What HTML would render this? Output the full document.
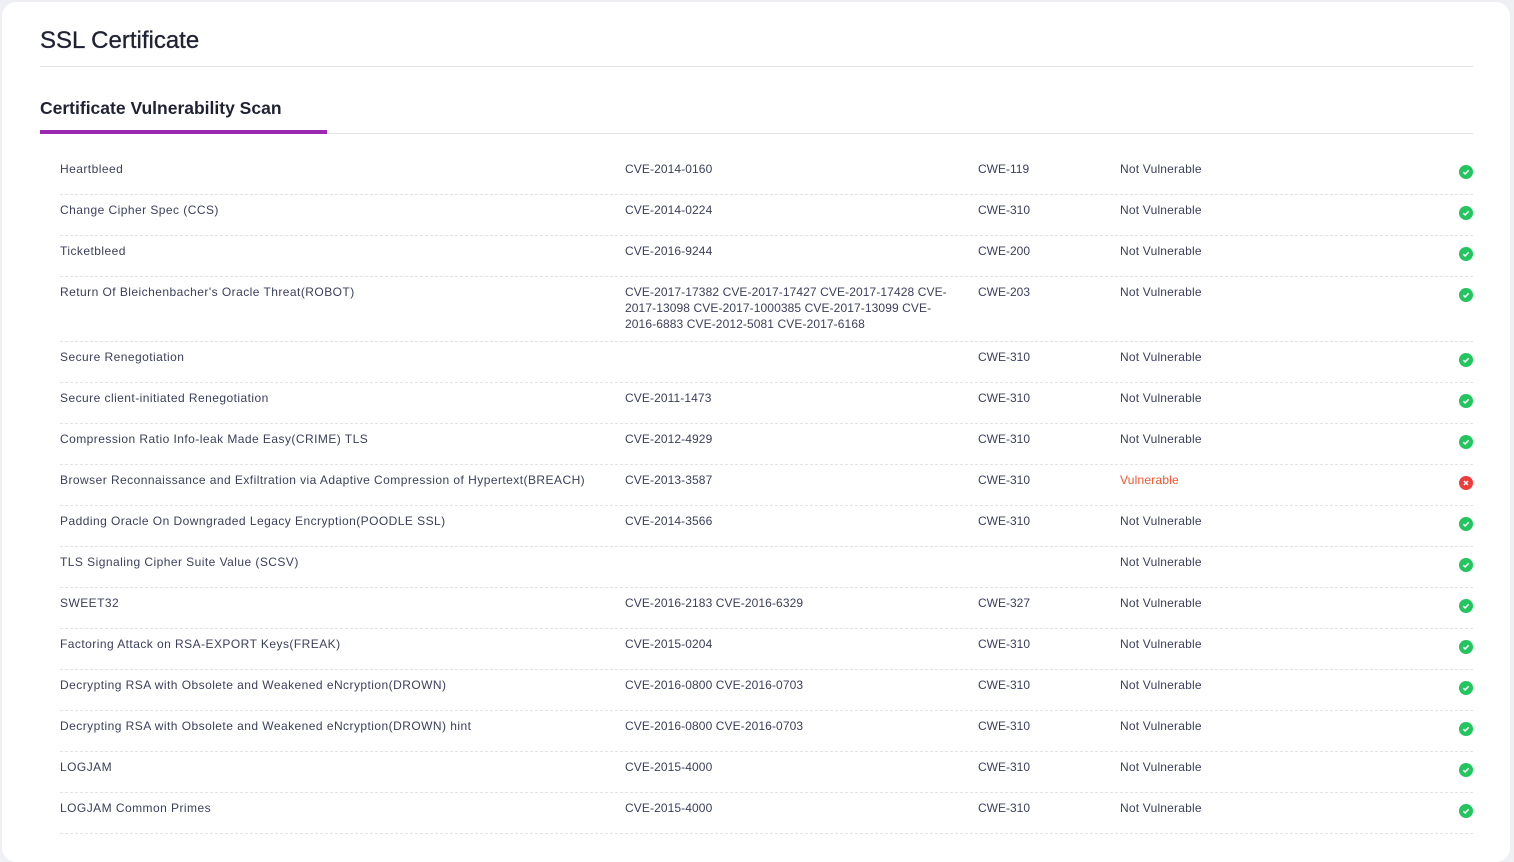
<!DOCTYPE html>
<html><head><style>
body{margin:0;background:#eef0f3;font-family:"Liberation Sans",sans-serif;width:1514px;height:844px;overflow:hidden;position:relative}
.card{position:absolute;left:2px;top:2px;width:1508px;height:860px;background:#fff;border-radius:14px}
h1{position:absolute;left:40px;top:27px;margin:0;font-size:24px;font-weight:normal;color:#1f2233;letter-spacing:0;-webkit-text-stroke:0.3px #1f2233}
.l1{position:absolute;left:40px;right:41px;top:66px;border-top:1px solid #e4e5ea}
h2{position:absolute;left:40px;top:98px;margin:0;font-size:17.5px;font-weight:bold;color:#1f2233}
.l2{position:absolute;left:40px;right:41px;top:133px;border-top:1px solid #e4e5ea}
.tab{position:absolute;left:40px;width:287px;top:130px;height:4px;background:#9c27b0}
.row{position:absolute;left:60px;width:1413px;border-bottom:1px dashed #e2e3e7;font-size:12px;color:#3a3f5c;line-height:16px}
.row div{position:absolute;top:8px}
.c1{left:0;letter-spacing:.45px}.c2{left:565px;width:340px;letter-spacing:.1px;white-space:nowrap}.c3{left:918px}.c4{left:1060px;letter-spacing:.2px}
.ic{position:absolute;left:1399px;top:12px!important;width:14px;height:14px;border-radius:50%;background:#22c55e}
.ic svg{position:absolute;left:0;top:0}
.bad{background:#ef3b3b}
.red{color:#f2542d}
</style></head><body>
<div class="card"></div>
<h1>SSL Certificate</h1>
<div class="l1"></div>
<h2>Certificate Vulnerability Scan</h2>
<div class="l2"></div>
<div class="tab"></div>

<div class="row" style="top:153px;height:41px"><div class="c1">Heartbleed</div><div class="c2">CVE-2014-0160</div><div class="c3">CWE-119</div><div class="c4">Not Vulnerable</div><div class="ic"><svg width="14" height="14"><path d="M4.3 7.2l1.8 1.7 3.6-3.6" stroke="#fff" stroke-width="1.5" fill="none"/></svg></div></div>
<div class="row" style="top:194px;height:41px"><div class="c1">Change Cipher Spec (CCS)</div><div class="c2">CVE-2014-0224</div><div class="c3">CWE-310</div><div class="c4">Not Vulnerable</div><div class="ic"><svg width="14" height="14"><path d="M4.3 7.2l1.8 1.7 3.6-3.6" stroke="#fff" stroke-width="1.5" fill="none"/></svg></div></div>
<div class="row" style="top:235px;height:41px"><div class="c1">Ticketbleed</div><div class="c2">CVE-2016-9244</div><div class="c3">CWE-200</div><div class="c4">Not Vulnerable</div><div class="ic"><svg width="14" height="14"><path d="M4.3 7.2l1.8 1.7 3.6-3.6" stroke="#fff" stroke-width="1.5" fill="none"/></svg></div></div>
<div class="row" style="top:276px;height:65px"><div class="c1">Return Of Bleichenbacher's Oracle Threat(ROBOT)</div><div class="c2">CVE-2017-17382 CVE-2017-17427 CVE-2017-17428 CVE-<br>2017-13098 CVE-2017-1000385 CVE-2017-13099 CVE-<br>2016-6883 CVE-2012-5081 CVE-2017-6168</div><div class="c3">CWE-203</div><div class="c4">Not Vulnerable</div><div class="ic"><svg width="14" height="14"><path d="M4.3 7.2l1.8 1.7 3.6-3.6" stroke="#fff" stroke-width="1.5" fill="none"/></svg></div></div>
<div class="row" style="top:341px;height:41px"><div class="c1">Secure Renegotiation</div><div class="c2"></div><div class="c3">CWE-310</div><div class="c4">Not Vulnerable</div><div class="ic"><svg width="14" height="14"><path d="M4.3 7.2l1.8 1.7 3.6-3.6" stroke="#fff" stroke-width="1.5" fill="none"/></svg></div></div>
<div class="row" style="top:382px;height:41px"><div class="c1">Secure client-initiated Renegotiation</div><div class="c2">CVE-2011-1473</div><div class="c3">CWE-310</div><div class="c4">Not Vulnerable</div><div class="ic"><svg width="14" height="14"><path d="M4.3 7.2l1.8 1.7 3.6-3.6" stroke="#fff" stroke-width="1.5" fill="none"/></svg></div></div>
<div class="row" style="top:423px;height:41px"><div class="c1">Compression Ratio Info-leak Made Easy(CRIME) TLS</div><div class="c2">CVE-2012-4929</div><div class="c3">CWE-310</div><div class="c4">Not Vulnerable</div><div class="ic"><svg width="14" height="14"><path d="M4.3 7.2l1.8 1.7 3.6-3.6" stroke="#fff" stroke-width="1.5" fill="none"/></svg></div></div>
<div class="row" style="top:464px;height:41px"><div class="c1">Browser Reconnaissance and Exfiltration via Adaptive Compression of Hypertext(BREACH)</div><div class="c2">CVE-2013-3587</div><div class="c3">CWE-310</div><div class="c4 red">Vulnerable</div><div class="ic bad"><svg width="14" height="14"><path d="M5 5l4 4M9 5l-4 4" stroke="#fff" stroke-width="1.5"/></svg></div></div>
<div class="row" style="top:505px;height:41px"><div class="c1">Padding Oracle On Downgraded Legacy Encryption(POODLE SSL)</div><div class="c2">CVE-2014-3566</div><div class="c3">CWE-310</div><div class="c4">Not Vulnerable</div><div class="ic"><svg width="14" height="14"><path d="M4.3 7.2l1.8 1.7 3.6-3.6" stroke="#fff" stroke-width="1.5" fill="none"/></svg></div></div>
<div class="row" style="top:546px;height:41px"><div class="c1">TLS Signaling Cipher Suite Value (SCSV)</div><div class="c2"></div><div class="c3"></div><div class="c4">Not Vulnerable</div><div class="ic"><svg width="14" height="14"><path d="M4.3 7.2l1.8 1.7 3.6-3.6" stroke="#fff" stroke-width="1.5" fill="none"/></svg></div></div>
<div class="row" style="top:587px;height:41px"><div class="c1">SWEET32</div><div class="c2">CVE-2016-2183 CVE-2016-6329</div><div class="c3">CWE-327</div><div class="c4">Not Vulnerable</div><div class="ic"><svg width="14" height="14"><path d="M4.3 7.2l1.8 1.7 3.6-3.6" stroke="#fff" stroke-width="1.5" fill="none"/></svg></div></div>
<div class="row" style="top:628px;height:41px"><div class="c1">Factoring Attack on RSA-EXPORT Keys(FREAK)</div><div class="c2">CVE-2015-0204</div><div class="c3">CWE-310</div><div class="c4">Not Vulnerable</div><div class="ic"><svg width="14" height="14"><path d="M4.3 7.2l1.8 1.7 3.6-3.6" stroke="#fff" stroke-width="1.5" fill="none"/></svg></div></div>
<div class="row" style="top:669px;height:41px"><div class="c1">Decrypting RSA with Obsolete and Weakened eNcryption(DROWN)</div><div class="c2">CVE-2016-0800 CVE-2016-0703</div><div class="c3">CWE-310</div><div class="c4">Not Vulnerable</div><div class="ic"><svg width="14" height="14"><path d="M4.3 7.2l1.8 1.7 3.6-3.6" stroke="#fff" stroke-width="1.5" fill="none"/></svg></div></div>
<div class="row" style="top:710px;height:41px"><div class="c1">Decrypting RSA with Obsolete and Weakened eNcryption(DROWN) hint</div><div class="c2">CVE-2016-0800 CVE-2016-0703</div><div class="c3">CWE-310</div><div class="c4">Not Vulnerable</div><div class="ic"><svg width="14" height="14"><path d="M4.3 7.2l1.8 1.7 3.6-3.6" stroke="#fff" stroke-width="1.5" fill="none"/></svg></div></div>
<div class="row" style="top:751px;height:41px"><div class="c1">LOGJAM</div><div class="c2">CVE-2015-4000</div><div class="c3">CWE-310</div><div class="c4">Not Vulnerable</div><div class="ic"><svg width="14" height="14"><path d="M4.3 7.2l1.8 1.7 3.6-3.6" stroke="#fff" stroke-width="1.5" fill="none"/></svg></div></div>
<div class="row" style="top:792px;height:41px"><div class="c1">LOGJAM Common Primes</div><div class="c2">CVE-2015-4000</div><div class="c3">CWE-310</div><div class="c4">Not Vulnerable</div><div class="ic"><svg width="14" height="14"><path d="M4.3 7.2l1.8 1.7 3.6-3.6" stroke="#fff" stroke-width="1.5" fill="none"/></svg></div></div>
</body></html>
